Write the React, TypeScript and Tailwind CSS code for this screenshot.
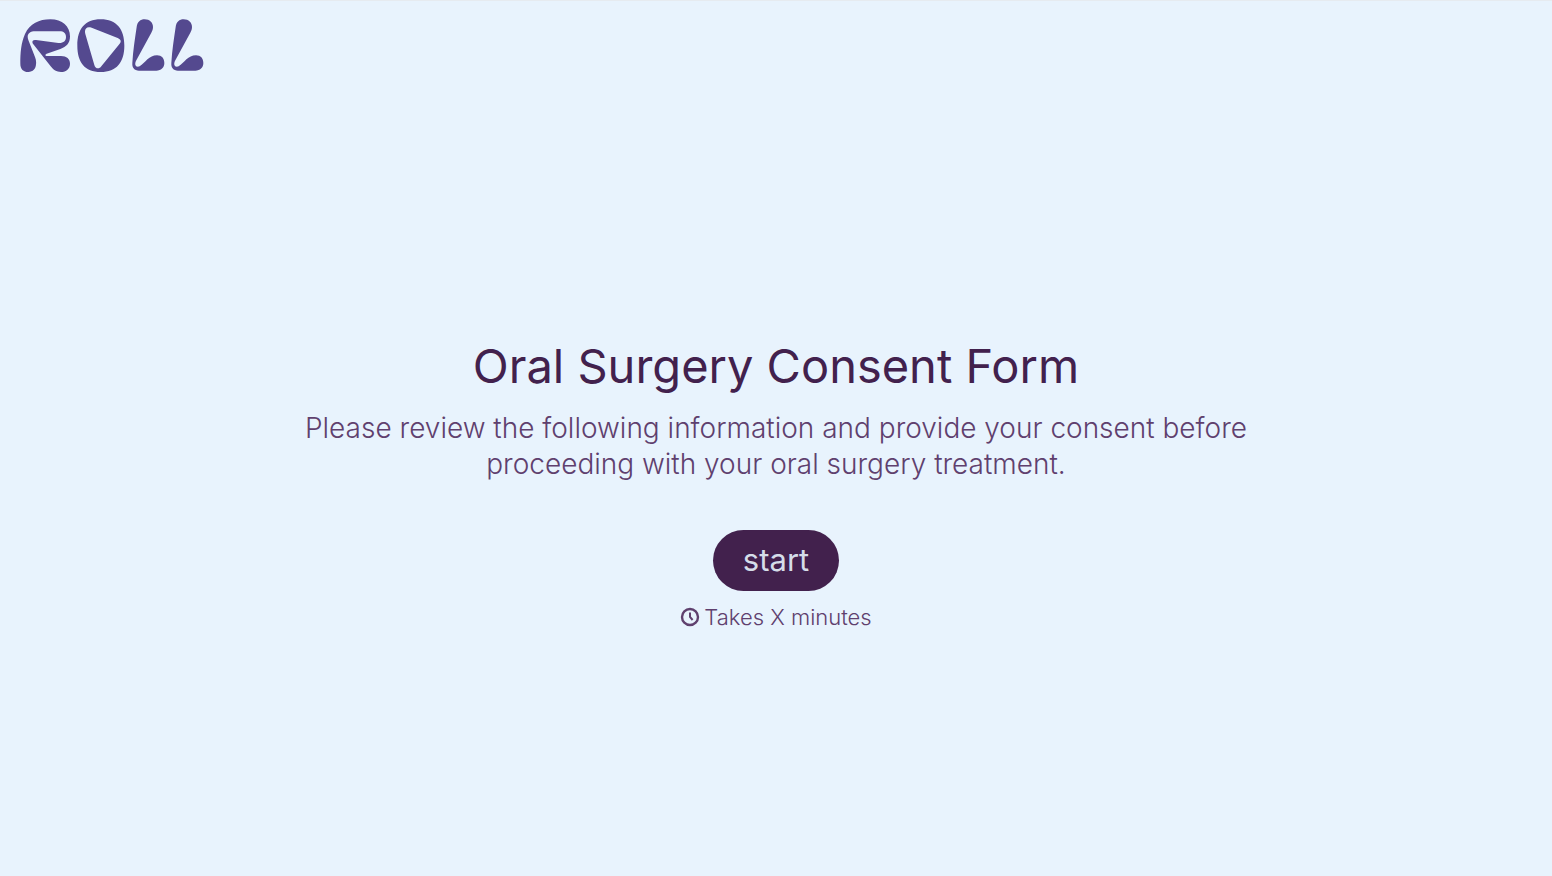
import { useId } from 'react';

function RollLogo() {
  const stroke = useId();

  return (
    <svg viewBox="30 56 552 159" className="h-[53px] w-auto" fill="#54498f" role="img" aria-label="Roll">
      <defs>
        <path
          id={stroke}
          d="M404 57C419 57 429 67 429 80C429 86 427 92 424 97L379 180C372 192 377 203 389 198C406 187 417 165 441 165C455 165 463 174 463 188C463 202 453 211 439 211H387C373 211 366 202 367 188C369 152 375 115 380 80C382 65 391 57 404 57Z"
        />
      </defs>
      <path d="M31 190C31 158 33 128 45 101C60 70 87 57 121 57C157 57 180 78 180 108C180 130 169 139 151 146L110 160C104 163 105 167 112 167H153C170 167 180 176 180 190C180 205 169 215 153 215C139 215 131 209 122 198L70 132C64 124 68 117 78 119L145 128C160 129 168 122 168 110C168 99 161 93 149 93H76C57 93 49 103 55 119L75 170C78 178 79 184 78 192C77 206 69 215 55 215C40 215 31 206 31 190Z" />
      <path
        fillRule="evenodd"
        d="M272 57C320 57 343 87 343 136C343 185 320 215 272 215C224 215 202 185 202 136C202 87 224 57 272 57ZM226 101L253 194C256 205 267 208 274 198L329 130C335 122 332 117 323 113L245 82C230 77 222 85 226 101Z"
      />
      <use href={`#${stroke}`} />
      <use href={`#${stroke}`} x="117" />
    </svg>
  );
}

function ClockIcon() {
  return (
    <svg viewBox="0 0 20 20" className="h-5 w-5" fill="none" stroke="currentColor" strokeWidth="2.4" aria-hidden="true">
      <circle cx="10" cy="10" r="8" />
      <path d="M10 5.5V10l2.6 3" strokeWidth="2" />
    </svg>
  );
}

export default function App() {
  return (
    <div className="flex min-h-screen flex-col border-t border-[#e6ebf0] bg-[#e8f3fd] font-['Inter','Open_Sans',sans-serif] text-[#42214d]">
      <header className="px-5 pt-[18px] pb-5">
        <RollLogo />
      </header>

      <main className="flex flex-1 flex-col items-center justify-center px-6 text-center">
        <h1 className="text-[47px] leading-[64px]">Oral Surgery Consent Form</h1>
        <p className="mt-3 max-w-[1000px] text-[28px] leading-9 font-light text-[#5f406e]">
          Please review the following information and provide your consent before proceeding with your oral surgery
          treatment.
        </p>
        <button type="button" className="mt-12 h-[61px] rounded-full bg-[#42214d] px-[30px] text-[31px] text-[#d5dde9]">
          start
        </button>
        <div className="mt-2 flex items-center gap-1 text-[22px] leading-9 font-light text-[#5f406e]">
          <ClockIcon />
          <span>Takes X minutes</span>
        </div>
      </main>
    </div>
  );
}
